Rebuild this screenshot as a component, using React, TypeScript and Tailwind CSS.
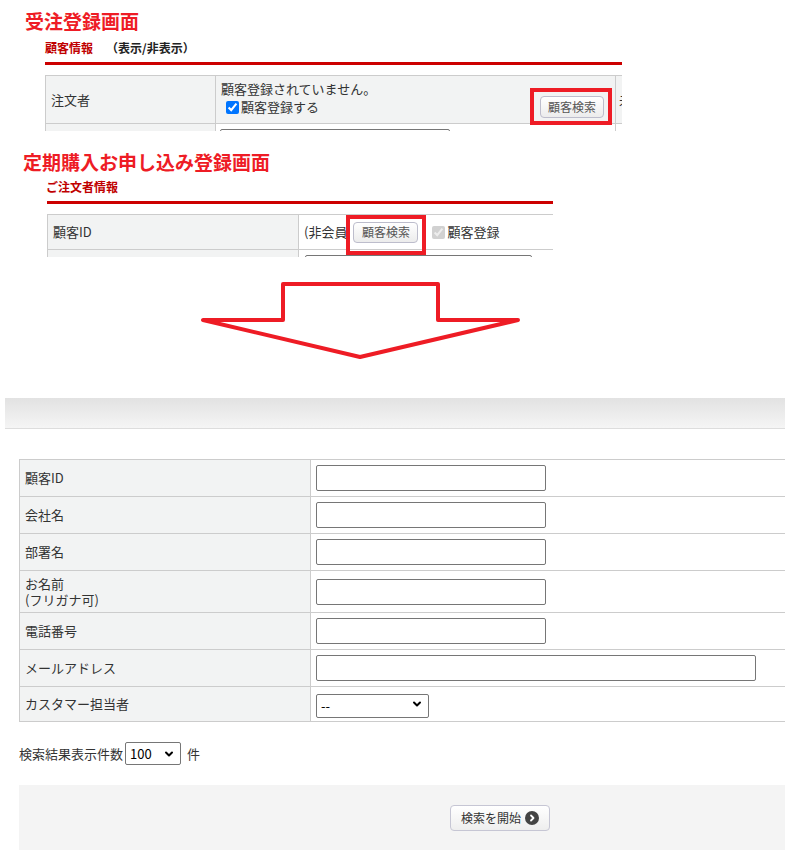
import { ChevronDown } from 'lucide-react';

const fieldRows: { label: string[]; kind: 'input' | 'wide' | 'select' }[] = [
  { label: ['顧客ID'], kind: 'input' },
  { label: ['会社名'], kind: 'input' },
  { label: ['部署名'], kind: 'input' },
  { label: ['お名前', '(フリガナ可)'], kind: 'input' },
  { label: ['電話番号'], kind: 'input' },
  { label: ['メールアドレス'], kind: 'wide' },
  { label: ['カスタマー担当者'], kind: 'select' },
];

function SearchButton({ className = '' }: { className?: string }) {
  return (
    <button
      type="button"
      className={`flex items-center justify-center rounded-[4px] border border-[#bdbdcc] bg-linear-to-b from-white to-[#ececec] text-[12px] leading-none text-[#555] ${className}`}
    >
      顧客検索
    </button>
  );
}

function Select({ value, className = '' }: { value: string; className?: string }) {
  return (
    <div className={`relative ${className}`}>
      <select className="h-full w-full appearance-none rounded-[2px] border border-[#767676] bg-white pl-[4px] text-[13px] text-black">
        <option>{value}</option>
      </select>
      <ChevronDown className="pointer-events-none absolute right-[6px] top-1/2 h-[12px] w-[12px] -translate-y-1/2 text-black" strokeWidth={4} />
    </div>
  );
}

export default function App() {
  return (
    <div className="relative h-[859px] w-[795px] overflow-hidden bg-white font-['Noto_Sans_CJK_JP',sans-serif] text-[#333]">
      {/* 受注登録画面 */}
      <div className="h-[131px] overflow-hidden pt-[10px]">
        <h1 className="ml-[25px] text-[19px] font-bold leading-[22px] text-[#ee1c25]">受注登録画面</h1>
        <div className="ml-[45px] mt-[8px] text-[12px] font-bold leading-[16px]">
          <span className="text-[#c00000]">顧客情報</span>
          <span className="ml-[13px] text-[#222]">（表示/非表示）</span>
        </div>
        <div className="ml-[45px] w-[577px] overflow-hidden">
          <div className="mt-[6px] h-[3px] bg-[#cc0000]" />
          <div className="mt-[10px] w-[600px] border-l border-t border-[#ccc]">
            <div className="flex h-[48px] border-b border-[#ccc]">
              <div className="flex w-[170px] shrink-0 items-center border-r border-[#ccc] bg-[#f2f3f3] pl-[5px] text-[13px]">注文者</div>
              <div className="flex w-[400px] shrink-0 justify-between border-r border-[#ccc] bg-[#f2f3f3] pl-[5px] pr-[11px]">
                <div className="pt-[4px] text-[13px] leading-[18px]">
                  <div>顧客登録されていません。</div>
                  <label className="flex items-center">
                    <input type="checkbox" defaultChecked className="ml-[5px] h-[13px] w-[13px] accent-[#0075ff]" />
                    <span className="ml-[2px]">顧客登録する</span>
                  </label>
                </div>
                <div className="relative mb-[5px] self-end">
                  <SearchButton className="h-[22px] w-[64px]" />
                  <div className="absolute -bottom-[7px] -left-[10px] -right-[8px] -top-[8px] border-[4px] border-[#ee1c25]" />
                </div>
              </div>
              <div className="flex w-[29px] items-center bg-[#f2f3f3] pl-[3px] text-[13px]">未</div>
            </div>
            <div className="flex h-[30px]">
              <div className="w-[170px] shrink-0 border-r border-[#ccc] bg-[#f2f3f3]" />
              <div className="w-[400px] shrink-0 border-r border-[#ccc] pl-[4px] pt-[5px]">
                <div className="h-[24px] w-[230px] rounded-[2px] border border-[#767676]" />
              </div>
            </div>
          </div>
        </div>
      </div>

      {/* 定期購入お申し込み登録画面 */}
      <div className="h-[126px] overflow-hidden pt-[20px]">
        <h1 className="ml-[23px] text-[19px] font-bold leading-[22px] text-[#ee1c25]">定期購入お申し込み登録画面</h1>
        <div className="ml-[46px] mt-[6px] text-[12px] font-bold leading-[16px] text-[#c00000]">ご注文者情報</div>
        <div className="ml-[47px] w-[506px] overflow-hidden">
          <div className="mt-[6px] h-[3px] bg-[#cc0000]" />
          <div className="mt-[10px] w-[560px] border-l border-t border-[#ccc]">
            <div className="flex h-[35px] border-b border-[#ccc]">
              <div className="flex w-[251px] shrink-0 items-center border-r border-[#ccc] bg-[#f2f3f3] pl-[5px] text-[13px]">顧客ID</div>
              <div className="flex flex-1 items-center pl-[5px] text-[13px]">
                <span>(非会員</span>
                <div className="relative ml-[6px]">
                  <SearchButton className="h-[21px] w-[65px]" />
                  <div className="absolute -bottom-[12px] -left-[7px] -right-[8px] -top-[7px] border-[4px] border-[#ee1c25]" />
                </div>
                <input type="checkbox" disabled defaultChecked className="ml-[14px] h-[13px] w-[13px]" />
                <span className="ml-[2px]">顧客登録</span>
              </div>
            </div>
            <div className="flex h-[20px]">
              <div className="w-[251px] shrink-0 border-r border-[#ccc] bg-[#f2f3f3]" />
              <div className="pl-[6px] pt-[5px]">
                <div className="h-[24px] w-[227px] rounded-[2px] border border-[#767676]" />
              </div>
            </div>
          </div>
        </div>
      </div>

      {/* 矢印 */}
      <div className="h-[141px]">
        <svg width="795" height="141" viewBox="0 0 795 141">
          <defs>
            <filter id="soft">
              <feGaussianBlur stdDeviation="0.6" />
            </filter>
          </defs>
          <g filter="url(#soft)" stroke="#9c9c9c" strokeWidth="1.6" strokeDasharray="4 1 3 1 2 1 5 1">
            <line x1="10" y1="43" x2="272" y2="43" />
            <line x1="449" y1="43" x2="757" y2="43" />
          </g>
          <polygon
            points="283,27 438,27 438,63 518,63 360,100 203,63 283,63"
            fill="none"
            stroke="#ee1c25"
            strokeWidth="4"
            strokeLinejoin="round"
          />
        </svg>
      </div>

      {/* 検索フォーム */}
      <div className="ml-[5px] h-[31px] w-[780px] border-b border-[#ddd] bg-linear-to-b from-[#e2e2e2] to-[#f5f5f5]" />

      <div className="ml-[19px] mt-[30px] w-[766px] border-l border-t border-[#ccc]">
        {fieldRows.map((row, i) => (
          <div key={i} className="flex border-b border-[#ccc]">
            <div className="flex w-[291px] shrink-0 flex-col justify-center border-r border-[#ccc] bg-[#f2f3f3] py-[4.5px] pl-[5px] text-[13px] leading-[16px]">
              {row.label.map((l) => (
                <span key={l}>{l}</span>
              ))}
            </div>
            <div className="flex flex-1 items-center py-[5px] pl-[5px]">
              {row.kind === 'input' && <input type="text" className="h-[26px] w-[230px] rounded-[2px] border border-[#767676] bg-white" />}
              {row.kind === 'wide' && <input type="text" className="h-[26px] w-[440px] rounded-[2px] border border-[#767676] bg-white" />}
              {row.kind === 'select' && <Select value="--" className="h-[24px] w-[113px]" />}
            </div>
          </div>
        ))}
      </div>

      <div className="ml-[19px] mt-[20px] flex h-[23px] items-center text-[13px]">
        <span>検索結果表示件数</span>
        <Select value="100" className="ml-[2px] h-[23px] w-[56px]" />
        <span className="ml-[6px]">件</span>
      </div>

      <div className="ml-[19px] mt-[20px] h-[65px] w-[766px] bg-[#f4f4f4] pl-[431px] pt-[20px]">
        <button
          type="button"
          className="flex h-[26px] w-[100px] items-center rounded-[4px] border border-[#c6c6d4] bg-linear-to-b from-white to-[#eeeeee] pl-[10px] text-[12px] leading-none text-[#333]"
        >
          <span>検索を開始</span>
          <span className="ml-[4px] flex h-[14px] w-[14px] items-center justify-center rounded-full bg-[#444]">
            <svg width="8" height="8" viewBox="0 0 8 8">
              <path d="M3 1.5 L5.5 4 L3 6.5" fill="none" stroke="white" strokeWidth="1.8" strokeLinecap="round" strokeLinejoin="round" />
            </svg>
          </span>
        </button>
      </div>
    </div>
  );
}
